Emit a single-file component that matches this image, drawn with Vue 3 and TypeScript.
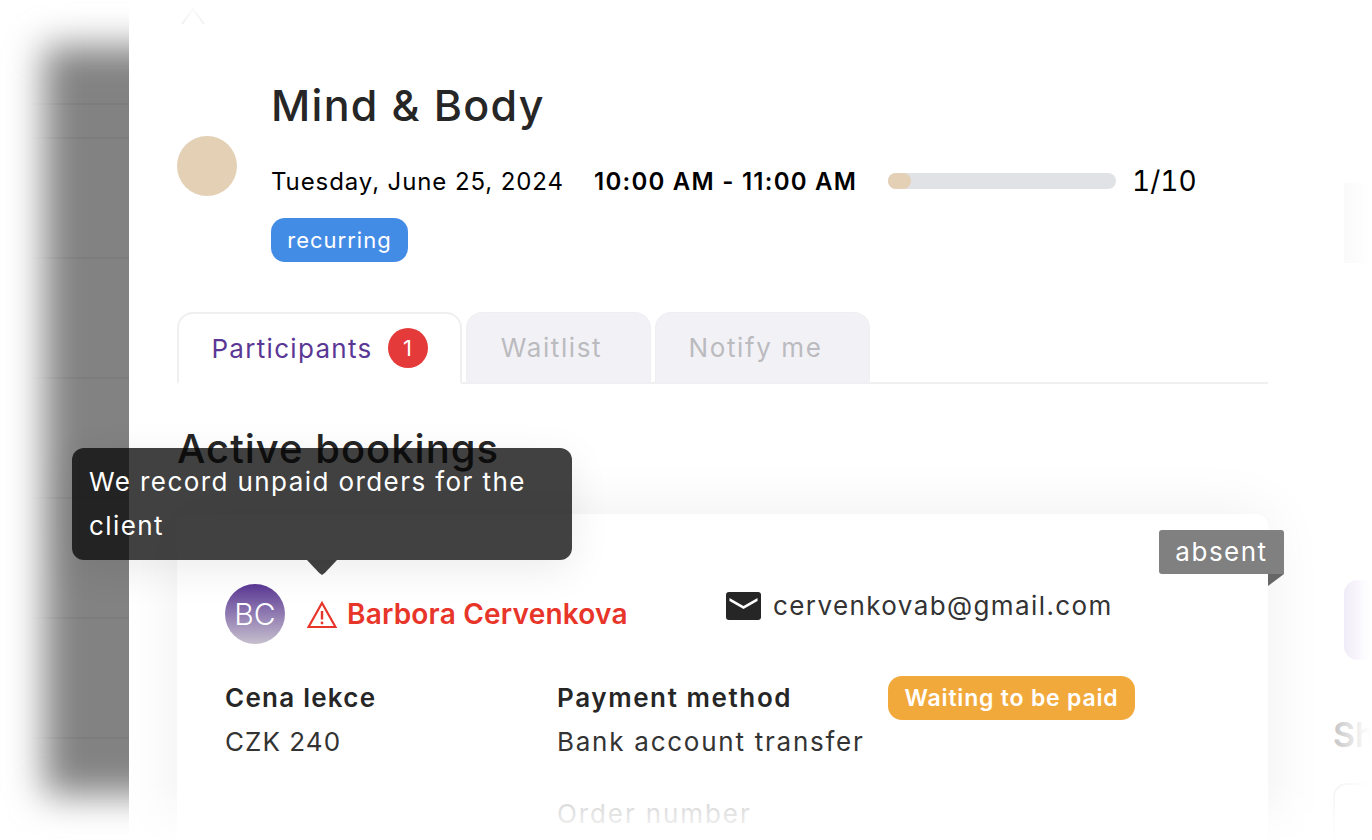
<script setup lang="ts">
const backLines: number[] = [1, 2, 3, 4, 5, 6]
const tabs = ['Waitlist', 'Notify me']
</script>

<template>
  <div class="screen">
    <div class="backdrop"></div>
    <div class="back-lines">
      <div class="back-line first"></div>
      <div v-for="n in backLines" :key="n" class="back-line"></div>
    </div>

    <main class="panel">
      <svg class="chevron" viewBox="0 0 24 20" width="24" height="20" aria-hidden="true">
        <defs>
          <linearGradient id="chev" x1="0" y1="0" x2="0" y2="1">
            <stop offset="0" stop-color="#fbfbfb" />
            <stop offset="1" stop-color="#f0f0f0" />
          </linearGradient>
        </defs>
        <path d="M1 19 L12 4 L23 19" fill="none" stroke="url(#chev)" stroke-width="2" />
      </svg>

      <section class="content">
        <header class="head">
          <div class="event-dot"></div>
          <div class="head-text">
            <h1 class="title">Mind &amp; Body</h1>
            <div class="meta">
              <span class="date">Tuesday, June 25, 2024</span>
              <strong class="time">10:00 AM - 11:00 AM</strong>
              <div class="progress"><div class="progress-fill"></div></div>
              <span class="count">1/10</span>
            </div>
            <span class="recurring">recurring</span>
          </div>
        </header>

        <nav class="tabs">
          <div class="tab active">
            <span>Participants</span>
            <span class="tab-badge">1</span>
          </div>
          <div v-for="t in tabs" :key="t" class="tab idle" :class="t === 'Waitlist' ? 'w1' : 'w2'">{{ t }}</div>
        </nav>

        <h2 class="section-title">Active bookings</h2>

        <article class="card">
          <div class="absent">absent<i class="fold"></i></div>

          <div class="person-row">
            <div class="person">
              <div class="initials">BC</div>
              <svg class="warn" viewBox="0 0 30 28" width="30" height="28" aria-hidden="true">
                <path d="M15 2 L28.5 26 H1.5 Z" fill="none" stroke="#e8352a" stroke-width="2.2" stroke-linejoin="miter" />
                <path d="M15 10 V18.5" stroke="#e8352a" stroke-width="2.4" />
                <circle cx="15" cy="22" r="1.4" fill="#e8352a" />
              </svg>
              <span class="name">Barbora Cervenkova</span>
            </div>
            <div class="email">
              <svg viewBox="0 0 35 28" width="35" height="28" aria-hidden="true">
                <rect width="35" height="28" rx="3" fill="#262626" />
                <path d="M3.5 6 L17.5 14 L31.5 6 V9 L17.5 17 L3.5 9 Z" fill="#fff" />
              </svg>
              <span>cervenkovab@gmail.com</span>
            </div>
          </div>

          <div class="details">
            <div class="col">
              <div class="label">Cena lekce</div>
              <div class="value price">CZK 240</div>
            </div>
            <div class="col">
              <div class="label wide">Payment method</div>
              <div class="value">Bank account transfer</div>
              <div class="order">Order number</div>
            </div>
            <div class="col">
              <span class="pay-badge">Waiting to be paid</span>
            </div>
          </div>
        </article>
      </section>

      <aside class="side">
        <div class="side-box plain"></div>
        <div class="side-box tint"></div>
        <div class="side-title">Sh</div>
        <div class="side-outline"></div>
      </aside>
    </main>

    <div class="fade-bottom"></div>

    <div class="tooltip">
      We record unpaid orders for the client
      <i class="tooltip-arrow"></i>
    </div>
  </div>
</template>

<style>
html, body { margin: 0; background: #fff; }
</style>

<style scoped>
.screen {
  position: relative;
  width: 1372px;
  height: 840px;
  overflow: hidden;
  background: #fff;
  font-family: Inter, "Liberation Sans", sans-serif;
  color: #262626;
}
.backdrop {
  position: absolute;
  left: 44px;
  top: 46px;
  width: 200px;
  height: 749px;
  background: #828282;
  filter: blur(18px);
}
.back-lines {
  position: absolute;
  left: 30px;
  top: 103px;
  width: 99px;
  display: flex;
  flex-direction: column;
  -webkit-mask-image: linear-gradient(90deg, transparent, #000 30%);
  mask-image: linear-gradient(90deg, transparent, #000 30%);
}
.back-line { height: 120px; border-top: 2px solid rgba(0, 0, 0, 0.04); box-sizing: border-box; }
.back-line.first { height: 34px; }
.panel {
  position: absolute;
  left: 129px;
  top: 0;
  width: 1243px;
  height: 840px;
  background: #fff;
  display: flex;
  overflow: hidden;
}
.chevron { position: absolute; left: 52px; top: 5px; }
.content {
  flex: none;
  width: 1091px;
  margin-left: 48px;
  padding-top: 80px;
}
.head { display: flex; gap: 34px; }
.event-dot {
  flex: none;
  width: 60px;
  height: 60px;
  margin-top: 56px;
  border-radius: 50%;
  background: #e3d0b5;
}
.head-text { display: flex; flex-direction: column; align-items: flex-start; }
.title {
  margin: 0;
  font-size: 43px;
  line-height: 50px;
  font-weight: 500;
  letter-spacing: 1.3px;
  color: #262626;
}
.meta {
  display: flex;
  align-items: center;
  height: 40px;
  margin-top: 31px;
  color: #000;
}
.date { width: 323px; font-size: 24px; letter-spacing: 0.9px; white-space: nowrap; }
.time { width: 294px; font-size: 24px; font-weight: 600; letter-spacing: 1.25px; white-space: nowrap; }
.progress { width: 228px; height: 16px; border-radius: 8px; background: #e1e2e6; }
.progress-fill { width: 23px; height: 16px; border-radius: 8px; background: #e3d0b5; }
.count { margin-left: 16px; font-size: 28px; font-variant-numeric: tabular-nums; letter-spacing: 0; }
.recurring {
  margin-top: 17px;
  width: 137px;
  height: 44px;
  box-sizing: border-box;
  border-radius: 14px;
  background: #438ce6;
  color: #fff;
  font-size: 22px;
  line-height: 44px;
  text-align: center;
  letter-spacing: 1px;
}
.tabs {
  display: flex;
  gap: 4px;
  margin-top: 50px;
  height: 72px;
  box-sizing: border-box;
  border-bottom: 2px solid #f0f0f3;
}
.tab {
  box-sizing: border-box;
  height: 72px;
  border-radius: 16px 16px 0 0;
  font-size: 26px;
  letter-spacing: 1.3px;
  display: flex;
  align-items: center;
  justify-content: center;
}
.tab.active {
  width: 285px;
  border: 2px solid #efeff2;
  border-bottom: 2px solid #fff;
  background: #fff;
  color: #5a3794;
  gap: 15px;
}
.tab.idle {
  background: #f2f2f6;
  color: #bbbbbf;
  height: 70px;
  padding: 0 14px 0 0;
  border: 1px solid #efeff3;
  border-bottom: 0;
  letter-spacing: 1.6px;
}
.tab.w1 { width: 185px; }
.tab.w2 { width: 215px; }
.tab-badge {
  width: 40px;
  height: 40px;
  border-radius: 50%;
  background: #e53a3a;
  color: #fff;
  text-align: center;
  line-height: 40px;
  font-size: 22px;
  letter-spacing: 0;
}
.section-title {
  margin: 40px 0 0;
  font-size: 40px;
  line-height: 50px;
  font-weight: 500;
  letter-spacing: 1px;
  color: #262626;
}
.card {
  position: relative;
  margin-top: 40px;
  height: 400px;
  box-sizing: border-box;
  padding: 70px 48px 0;
  border-radius: 12px;
  background: #fff;
  box-shadow: 0 0 60px rgba(0, 0, 0, 0.07);
}
.absent {
  position: absolute;
  right: -16px;
  top: 16px;
  width: 125px;
  height: 44px;
  border-radius: 3px 3px 0 3px;
  background: #808080;
  color: #fff;
  font-size: 26px;
  line-height: 44px;
  text-align: center;
  letter-spacing: 1.5px;
}
.fold {
  position: absolute;
  right: 0;
  top: 44px;
  width: 0;
  height: 0;
  border-top: 12px solid #666;
  border-right: 16px solid transparent;
}
.person-row { display: flex; height: 60px; }
.person { width: 501px; display: flex; align-items: center; }
.initials {
  width: 60px;
  height: 60px;
  flex: none;
  border-radius: 50%;
  background: linear-gradient(180deg, #5a3794, #c6bfce);
  color: #fff;
  font-size: 30px;
  font-weight: 300;
  line-height: 60px;
  text-align: center;
}
.warn { margin: 2px 10px 0 22px; flex: none; }
.name { font-size: 28px; font-weight: 600; color: #e8352a; letter-spacing: 0.2px; white-space: nowrap; }
.email {
  display: flex;
  align-items: center;
  gap: 12px;
  height: 44px;
  font-size: 26px;
  letter-spacing: 1.4px;
  color: #333;
}
.email span { margin-top: -2px; }
.details {
  display: grid;
  grid-template-columns: 332px 331px auto;
  margin-top: 32px;
}
.label { height: 44px; line-height: 44px; font-size: 26px; font-weight: 600; letter-spacing: 1.25px; color: #262626; white-space: nowrap; }
.label.wide { letter-spacing: 1.6px; }
.value { height: 40px; margin-top: 2px; line-height: 40px; font-size: 26px; letter-spacing: 1.75px; color: #333; white-space: nowrap; }
.value.price { letter-spacing: 1.05px; }
.order { margin-top: 32px; height: 40px; line-height: 40px; font-size: 26px; letter-spacing: 1.9px; color: #c4c4c4; }
.pay-badge {
  display: inline-block;
  width: 247px;
  height: 44px;
  border-radius: 14px;
  background: #f2a93b;
  color: #fff;
  font-size: 23px;
  font-weight: 600;
  line-height: 44px;
  letter-spacing: 0.8px;
  text-align: center;
  white-space: nowrap;
}
.side {
  flex: none;
  width: 100px;
  height: 900px;
  margin-left: 65px;
  position: relative;
  display: flex;
  flex-direction: column;
  padding-top: 183px;
  box-sizing: border-box;
}
.side::after {
  content: "";
  position: absolute;
  inset: 0;
  background: linear-gradient(90deg, rgba(255,255,255,0) 0%, rgba(255,255,255,0.85) 30%, #fff 38%);
}
.side-box { flex: none; margin-left: 11px; height: 80px; width: 60px; }
.side-box.plain { background: #f7f7f7; }
.side-box.tint { margin-top: 317px; border-radius: 14px; background: #e9e3f4; }
.side-title {
  flex: none;
  margin-top: 54px;
  font-size: 34px;
  line-height: 42px;
  font-weight: 600;
  color: #c4c4c4;
}
.side-outline {
  flex: none;
  margin-top: 27px;
  height: 80px;
  width: 60px;
  border: 2px solid #f4f4f4;
  border-radius: 14px;
}
.fade-bottom {
  position: absolute;
  left: 129px;
  right: 0;
  bottom: 0;
  height: 60px;
  background: linear-gradient(180deg, rgba(255,255,255,0), rgba(255,255,255,0.95));
}
.tooltip {
  position: absolute;
  left: 72px;
  top: 448px;
  width: 500px;
  height: 112px;
  box-sizing: border-box;
  padding: 12px 17px;
  border-radius: 12px;
  background: rgba(5, 5, 5, 0.76);
  color: #fff;
  font-size: 26px;
  line-height: 44px;
  letter-spacing: 1.42px;
  box-shadow: 0 10px 40px rgba(0,0,0,0.08);
}
.tooltip-arrow {
  position: absolute;
  left: 235px;
  top: 112px;
  width: 30px;
  height: 15px;
  background: rgba(5, 5, 5, 0.76);
  clip-path: polygon(0 0, 100% 0, 60% 85%, 50% 100%, 40% 85%);
}
</style>
